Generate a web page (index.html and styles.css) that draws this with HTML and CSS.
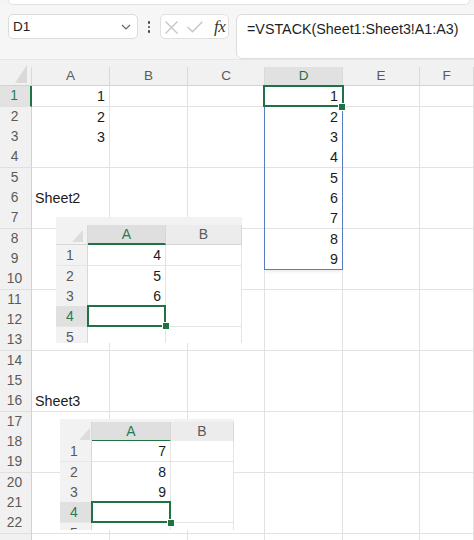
FILE: index.html
```html
<!DOCTYPE html>
<html>
<head>
<meta charset="utf-8">
<link rel="stylesheet" href="styles.css">
</head>
<body>
<div class="topstrip"></div>
<div class="toolbar">
  <div class="namebox">
    <span>D1</span>
    <svg class="chev" width="10" height="6" viewBox="0 0 10 6"><path d="M1 1 L5 5 L9 1" fill="none" stroke="#666" stroke-width="1.2"/></svg>
  </div>
  <div class="vdots"><i></i><i></i><i></i></div>
  <div class="fxbox">
    <svg class="ico-x" width="13" height="13" viewBox="0 0 13 13"><path d="M0.5 0.5 L12.5 12.5 M12.5 0.5 L0.5 12.5" stroke="#c4c4c4" stroke-width="1.3"/></svg>
    <svg class="ico-ok" width="16" height="12" viewBox="0 0 16 12"><path d="M0.7 6 L5.5 10.8 L15.3 0.7" fill="none" stroke="#c4c4c4" stroke-width="1.3"/></svg>
    <span class="fx">fx</span>
  </div>
  <div class="formula">=VSTACK(Sheet1:Sheet3!A1:A3)</div>
</div>

<div class="sheet">
  <div class="grid colhead">
    <div class="hc corner"><span class="tri"></span></div>
    <div class="hc">A</div>
    <div class="hc">B</div>
    <div class="hc">C</div>
    <div class="hc sel">D</div>
    <div class="hc">E</div>
    <div class="hc">F</div>
  </div>

  <div class="grid row tall"><div class="rh sel">1</div><div class="c n">1</div><div class="c"></div><div class="c"></div><div class="c n">1</div><div class="c"></div><div class="c"></div></div>
  <div class="grid row"><div class="rh">2</div><div class="c n">2</div><div class="c"></div><div class="c"></div><div class="c n">2</div><div class="c"></div><div class="c"></div></div>
  <div class="grid row"><div class="rh">3</div><div class="c n">3</div><div class="c"></div><div class="c"></div><div class="c n">3</div><div class="c"></div><div class="c"></div></div>
  <div class="grid row tall"><div class="rh">4</div><div class="c"></div><div class="c"></div><div class="c"></div><div class="c n">4</div><div class="c"></div><div class="c"></div></div>
  <div class="grid row"><div class="rh">5</div><div class="c"></div><div class="c"></div><div class="c"></div><div class="c n">5</div><div class="c"></div><div class="c"></div></div>
  <div class="grid row"><div class="rh">6</div><div class="c t">Sheet2</div><div class="c"></div><div class="c"></div><div class="c n">6</div><div class="c"></div><div class="c"></div></div>
  <div class="grid row tall"><div class="rh">7</div><div class="c"></div><div class="c"></div><div class="c"></div><div class="c n">7</div><div class="c"></div><div class="c"></div></div>
  <div class="grid row"><div class="rh">8</div><div class="c"></div><div class="c"></div><div class="c"></div><div class="c n">8</div><div class="c"></div><div class="c"></div></div>
  <div class="grid row"><div class="rh">9</div><div class="c"></div><div class="c"></div><div class="c"></div><div class="c n">9</div><div class="c"></div><div class="c"></div></div>
  <div class="grid row tall"><div class="rh">10</div><div class="c"></div><div class="c"></div><div class="c"></div><div class="c"></div><div class="c"></div><div class="c"></div></div>
  <div class="grid row"><div class="rh">11</div><div class="c"></div><div class="c"></div><div class="c"></div><div class="c"></div><div class="c"></div><div class="c"></div></div>
  <div class="grid row"><div class="rh">12</div><div class="c"></div><div class="c"></div><div class="c"></div><div class="c"></div><div class="c"></div><div class="c"></div></div>
  <div class="grid row tall"><div class="rh">13</div><div class="c"></div><div class="c"></div><div class="c"></div><div class="c"></div><div class="c"></div><div class="c"></div></div>
  <div class="grid row"><div class="rh">14</div><div class="c"></div><div class="c"></div><div class="c"></div><div class="c"></div><div class="c"></div><div class="c"></div></div>
  <div class="grid row"><div class="rh">15</div><div class="c"></div><div class="c"></div><div class="c"></div><div class="c"></div><div class="c"></div><div class="c"></div></div>
  <div class="grid row tall"><div class="rh">16</div><div class="c t">Sheet3</div><div class="c"></div><div class="c"></div><div class="c"></div><div class="c"></div><div class="c"></div></div>
  <div class="grid row"><div class="rh">17</div><div class="c"></div><div class="c"></div><div class="c"></div><div class="c"></div><div class="c"></div><div class="c"></div></div>
  <div class="grid row"><div class="rh">18</div><div class="c"></div><div class="c"></div><div class="c"></div><div class="c"></div><div class="c"></div><div class="c"></div></div>
  <div class="grid row tall"><div class="rh">19</div><div class="c"></div><div class="c"></div><div class="c"></div><div class="c"></div><div class="c"></div><div class="c"></div></div>
  <div class="grid row"><div class="rh">20</div><div class="c"></div><div class="c"></div><div class="c"></div><div class="c"></div><div class="c"></div><div class="c"></div></div>
  <div class="grid row"><div class="rh">21</div><div class="c"></div><div class="c"></div><div class="c"></div><div class="c"></div><div class="c"></div><div class="c"></div></div>
  <div class="grid row tall"><div class="rh">22</div><div class="c"></div><div class="c"></div><div class="c"></div><div class="c"></div><div class="c"></div><div class="c"></div></div>
  <div class="grid row"><div class="rh"></div><div class="c"></div><div class="c"></div><div class="c"></div><div class="c"></div><div class="c"></div><div class="c"></div></div>

  <div class="spill"></div>
  <div class="active"></div>
  <div class="handle main-handle"></div>

  <div class="pic pic1">
    <div class="pg phead">
      <div class="ph pcorner"><span class="ptri"></span></div>
      <div class="ph psel">A</div>
      <div class="ph">B</div>
    </div>
    <div class="pg prow tall"><div class="prh">1</div><div class="pc">4</div><div class="pc"></div></div>
    <div class="pg prow"><div class="prh">2</div><div class="pc">5</div><div class="pc"></div></div>
    <div class="pg prow"><div class="prh">3</div><div class="pc">6</div><div class="pc"></div></div>
    <div class="pg prow tall"><div class="prh sel">4</div><div class="pc"></div><div class="pc"></div></div>
    <div class="pg prow"><div class="prh">5</div><div class="pc"></div><div class="pc"></div></div>
    <div class="pactive"></div>
    <div class="handle phandle"></div>
  </div>

  <div class="pic pic2">
    <div class="pg phead">
      <div class="ph pcorner"><span class="ptri"></span></div>
      <div class="ph psel">A</div>
      <div class="ph">B</div>
    </div>
    <div class="pg prow tall"><div class="prh">1</div><div class="pc">7</div><div class="pc"></div></div>
    <div class="pg prow"><div class="prh">2</div><div class="pc">8</div><div class="pc"></div></div>
    <div class="pg prow"><div class="prh">3</div><div class="pc">9</div><div class="pc"></div></div>
    <div class="pg prow tall"><div class="prh sel">4</div><div class="pc"></div><div class="pc"></div></div>
    <div class="pg prow"><div class="prh">5</div><div class="pc"></div><div class="pc"></div></div>
    <div class="pactive"></div>
    <div class="handle phandle"></div>
  </div>
</div>
</body>
</html>
```

FILE: styles.css
```css
* { box-sizing: border-box; }

body {
  margin: 0;
  width: 474px;
  height: 540px;
  overflow: hidden;
  background: #f5f5f5;
  font-family: "Liberation Sans", Arial, sans-serif;
  color: #1b1b1b;
}

/* ---------- top strip & toolbar ---------- */
.topstrip {
  height: 5px;
  margin: 0 4px 0 8px;
  background: #fff;
  border: 1px solid #e2e2e2;
  border-top: none;
  border-radius: 0 0 6px 6px;
}

.toolbar {
  height: 55px;
  display: flex;
  align-items: flex-start;
  padding-top: 9px;
  border-bottom: 1px solid #e6e6e6;
  background: #f6f6f6;
}

.namebox {
  margin-left: 8px;
  width: 130px;
  height: 25px;
  background: #fff;
  border: 1px solid #dcdcdc;
  border-radius: 5px;
  display: flex;
  align-items: center;
  justify-content: space-between;
  padding: 0 6px 0 4px;
  font-size: 13.5px;
  color: #222;
}

.chev { margin-top: 1px; }

.vdots {
  width: 4px;
  margin: 7px 9px 0 9px;
  display: flex;
  flex-direction: column;
  align-items: center;
  gap: 2px;
}
.vdots i {
  display: block;
  width: 2.6px;
  height: 2.6px;
  border-radius: 50%;
  background: #444;
}

.fxbox {
  width: 69px;
  height: 25px;
  background: #fff;
  border: 1px solid #e0e0e0;
  border-radius: 5px;
  display: flex;
  align-items: center;
  padding-left: 4px;
}
.ico-x { margin-top: 1px; }
.ico-ok { margin-left: 9px; margin-top: 1px; }
.fx {
  margin-left: 11px;
  font-family: "Liberation Serif", "Times New Roman", serif;
  font-style: italic;
  font-size: 17px;
  color: #333;
  letter-spacing: -0.5px;
  line-height: 1;
}

.formula {
  flex: 1;
  margin-left: 7px;
  margin-right: -20px;
  height: 45px;
  background: #fff;
  border: 1px solid #dcdcdc;
  border-radius: 6px;
  padding: 4px 0 0 10px;
  font-size: 14.3px;
  line-height: 20px;
  color: #1e1e1e;
  white-space: nowrap;
}

/* ---------- sheet grid ---------- */
.sheet {
  position: relative;
}

.grid {
  display: grid;
  grid-template-columns: 32px 78px 78px 77px 78px 77px 1fr;
}

.colhead {
  height: 26px;
  align-items: end;
  background: #f1f1f1;
}
.hc {
  height: 19px;
  border-right: 1px solid #d9d9d9;
  border-bottom: 1px solid #d2d2d2;
  text-align: center;
  font-size: 13.5px;
  line-height: 18px;
  color: #5a5a5a;
}
.hc.sel {
  background: #e1e1e1;
  color: #1f7244;
}
.corner {
  display: flex;
  justify-content: flex-end;
  align-items: flex-end;
  padding: 0 4px 2px 0;
}
.tri {
  display: block;
  flex: none;
  width: 12px;
  height: 18px;
  background: #d9d9d9;
  clip-path: polygon(100% 0, 100% 100%, 0 100%);
}

.row {
  height: 20px;
  line-height: 20px;
  font-size: 14.3px;
}
.row.tall { height: 21px; }
.rh {
  background: #f1f1f1;
  border-right: 1px solid #d2d2d2;
  border-bottom: 1px solid #e0e0e0;
  text-align: center;
  padding-right: 2px;
  font-size: 13.8px;
  color: #5a5a5a;
}
.rh.sel {
  background: #e2e2e2;
  color: #2b7a4f;
  border-right: 2px solid #1f7244;
}
.c {
  background: #fff;
  border-right: 1px solid #e2e2e2;
  border-bottom: 1px solid #e2e2e2;
  white-space: nowrap;
}
.c.n { text-align: right; padding-right: 4px; }
.c.t { padding-left: 3px; overflow: visible; }

/* ---------- selection overlays ---------- */
.spill {
  position: absolute;
  left: 264px;
  top: 26px;
  width: 79px;
  height: 184px;
  border: 1px solid #5a7cc4;
  box-shadow: 0 3px 4px -2px rgba(0, 0, 0, 0.12);
}
.active {
  position: absolute;
  left: 263px;
  top: 25px;
  width: 81px;
  height: 22px;
  border: 2px solid #1f7244;
}
.handle {
  position: absolute;
  width: 6px;
  height: 6px;
  background: #1f7244;
  outline: 1px solid #fff;
}
.main-handle { left: 339px; top: 44px; }

/* ---------- embedded pictures ---------- */
.pic {
  position: absolute;
  background: #f2f2f2;
  overflow: hidden;
  font-size: 14px;
}
.pic1 {
  left: 56px;
  top: 157px;
  width: 186px;
  height: 126px;
  padding-top: 8px;
}
.pic2 {
  left: 60px;
  top: 359px;
  width: 174px;
  height: 111px;
  padding-top: 3px;
}
.pg { display: grid; }
.pic1 .pg { grid-template-columns: 32px 78px 76px; }
.pic2 .pg { grid-template-columns: 32px 79px 63px; }

.phead { height: 20px; }
.pic2 .phead { height: 19px; }
.ph {
  background: #ececec;
  border-right: 1px solid #d8d8d8;
  border-bottom: 1px solid #d6d6d6;
  text-align: center;
  line-height: 18px;
  color: #5a5a5a;
}
.ph.pcorner {
  background: #f2f2f2;
  display: flex;
  justify-content: flex-end;
  align-items: flex-end;
  padding: 0 4px 2px 0;
}
.pic2 .ph.pcorner { padding: 0 1px 1px 0; }
.ptri {
  display: block;
  flex: none;
  width: 11px;
  height: 12px;
  background: #dcdcdc;
  clip-path: polygon(100% 0, 100% 100%, 0 100%);
}
.ph.psel {
  background: #dfdfdf;
  color: #2b7a4f;
  border-bottom: 2px solid #1f7244;
}

.prow {
  height: 20px;
  line-height: 20px;
}
.prow.tall { height: 21px; }
.prh {
  background: #f2f2f2;
  border-right: 1px solid #d8d8d8;
  border-bottom: 1px solid #e6e6e6;
  text-align: center;
  padding-right: 3px;
  color: #5a5a5a;
}
.prh.sel {
  background: #e0e0e0;
  color: #2b7a4f;
}
.pc {
  background: #fff;
  border-right: 1px solid #e4e4e4;
  border-bottom: 1px solid #e4e4e4;
  text-align: right;
  padding-right: 4px;
}
.pactive {
  position: absolute;
  border: 2px solid #1f7244;
  width: 80px;
  height: 22px;
}
.pic1 .pactive { left: 31px; top: 88px; width: 79px; }
.pic2 .pactive { left: 31px; top: 82px; }
.pic1 .phandle { left: 107px; top: 106px; }
.pic2 .phandle { left: 108px; top: 101px; }
```
